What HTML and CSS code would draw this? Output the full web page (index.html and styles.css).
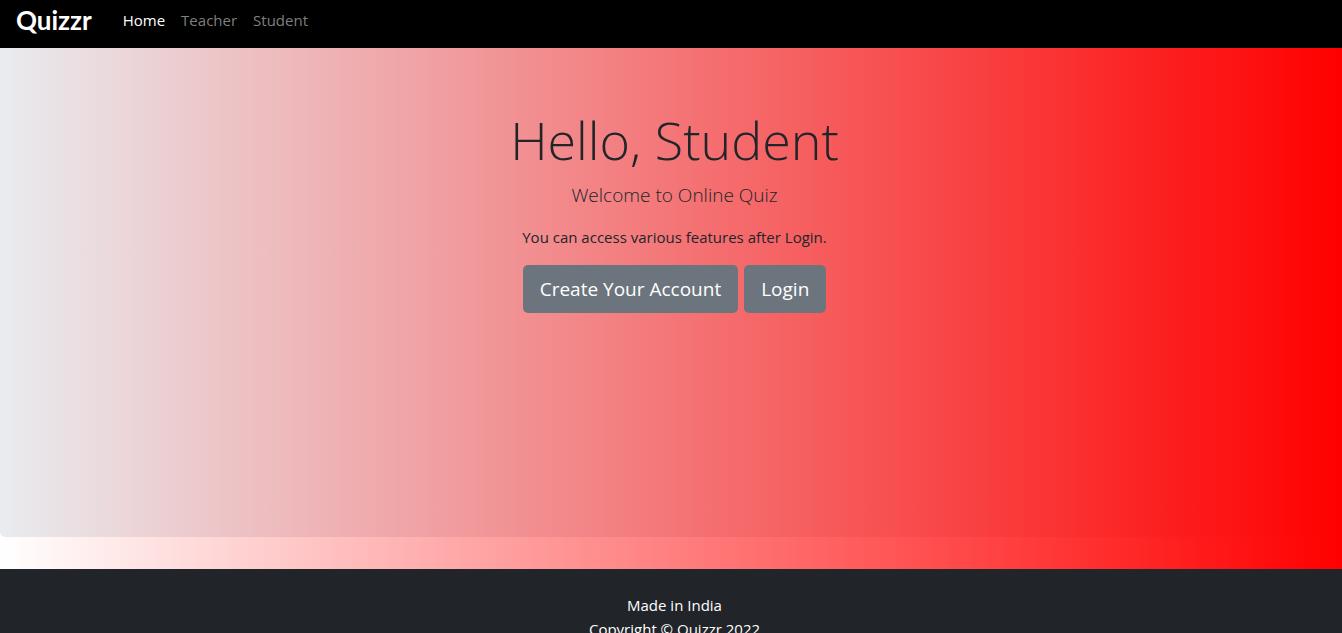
FILE: index.html
```html
<!DOCTYPE html>
<html lang="en">
<head>
<meta charset="utf-8">
<title>Quizzr</title>
<link rel="stylesheet" href="styles.css">
</head>
<body>
<nav class="navbar">
  <a class="brand" href="#">Quizzr</a>
  <a class="nav-link active" href="#">Home</a>
  <a class="nav-link" href="#">Teacher</a>
  <a class="nav-link" href="#">Student</a>
</nav>
<main class="page">
  <section class="hero">
    <h1 class="title">Hello, Student</h1>
    <p class="lead">Welcome to Online Quiz</p>
    <p class="note">You can access various features after Login.</p>
    <div class="actions">
      <button class="btn" type="button">Create Your Account</button>
      <button class="btn" type="button">Login</button>
    </div>
  </section>
</main>
<footer class="footer">
  <p class="footer-line">Made in India</p>
  <p class="footer-line">Copyright © Quizzr 2022</p>
</footer>
</body>
</html>
```
FILE: styles.css
```css
* { box-sizing: border-box; }
body {
  margin: 0;
  font-family: "Segoe UI", "Open Sans", "Noto Sans", sans-serif;
  font-size: 15px;
  line-height: 24px;
  color: #212529;
}
.navbar {
  display: flex;
  align-items: center;
  height: 48px;
  padding: 0 16px 8px;
  background: #000;
}
.brand {
  margin-right: 23px;
  font-family: "Lato", sans-serif;
  font-size: 26px;
  font-weight: 700;
  color: #fff;
  text-decoration: none;
}
.nav-link {
  padding: 0 8px;
  color: #7f7f7f;
  text-decoration: none;
}
.nav-link.active { color: #fff; }
.page {
  padding-bottom: 32px;
  background: linear-gradient(to right, #fff, #f00);
}
.hero {
  min-height: 489px;
  padding: 60px 0 64px 7px;
  border-radius: 0 0 5px 5px;
  background: linear-gradient(to right, #e9ecef, #f00);
  text-align: center;
}
.title {
  margin: 0 0 8px;
  font-size: 52px;
  font-weight: 300;
  line-height: 64px;
}
.lead {
  margin: 0 0 15px;
  font-size: 19px;
  font-weight: 300;
  line-height: 30px;
}
.note { margin: 0 0 16px; }
.actions {
  display: flex;
  justify-content: center;
  gap: 6px;
}
.btn {
  height: 48px;
  padding: 0 17px;
  border: 0;
  border-radius: 5px;
  background: #6c757d;
  color: #fff;
  font-family: inherit;
  font-size: 19px;
  cursor: pointer;
}
.footer {
  padding: 24px 0 24px 7px;
  background: #212529;
  color: #fff;
  text-align: center;
}
.footer-line { margin: 0; }
```
